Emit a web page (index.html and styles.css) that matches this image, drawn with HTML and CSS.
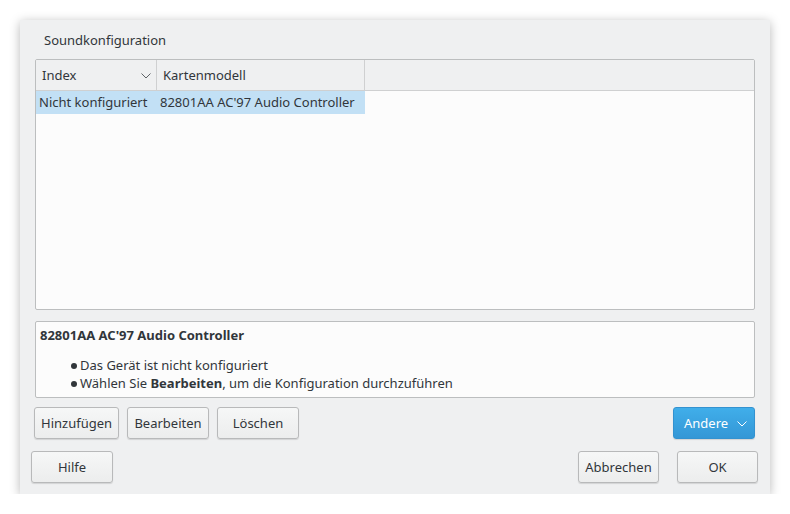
FILE: index.html
```html
<!DOCTYPE html>
<html lang="de">
<head>
<meta charset="utf-8">
<link rel="stylesheet" href="styles.css">
</head>
<body>
<div class="dialog">
  <div class="title">Soundkonfiguration</div>
  <div class="table">
    <div class="thead">
      <div class="th c1">Index
        <svg class="chev" width="10" height="6" viewBox="0 0 10 6"><path d="M0.5 0.5 L5 5 L9.5 0.5" fill="none" stroke="#5e6266" stroke-width="1"/></svg>
      </div>
      <div class="th c2">Kartenmodell</div>
      <div class="th rest"></div>
    </div>
    <div class="tbody">
      <div class="row sel">
        <div class="td c1">Nicht konfiguriert</div>
        <div class="td c2">82801AA AC'97 Audio Controller</div>
      </div>
    </div>
  </div>
  <div class="info">
    <div class="info-title">82801AA AC'97 Audio Controller</div>
    <ul class="info-list">
      <li>Das Gerät ist nicht konfiguriert</li>
      <li>Wählen Sie <b>Bearbeiten</b>, um die Konfiguration durchzuführen</li>
    </ul>
  </div>
  <div class="actions">
    <button class="btn b-add">Hinzufügen</button>
    <button class="btn b-edit">Bearbeiten</button>
    <button class="btn b-del">Löschen</button>
    <span class="spacer"></span>
    <button class="btn primary">Andere
      <svg class="chev2" width="10" height="6" viewBox="0 0 10 6"><path d="M0.5 0.5 L5 5 L9.5 0.5" fill="none" stroke="#ffffff" stroke-width="1"/></svg>
    </button>
  </div>
  <div class="footer">
    <button class="btn b-help">Hilfe</button>
    <span class="spacer"></span>
    <button class="btn b-cancel">Abbrechen</button>
    <button class="btn b-ok">OK</button>
  </div>
</div>
</body>
</html>
```
FILE: styles.css
```css
html, body {
  margin: 0;
  padding: 0;
  background: #ffffff;
}
body {
  font-family: "Noto Sans", "DejaVu Sans", sans-serif;
  font-size: 13px;
  color: #31363b;
}
.dialog {
  margin: 20px 0 0 20px;
  width: 750px;
  height: 474px;
  box-sizing: border-box;
  background: #eff0f1;
  box-shadow: 0 2px 10px rgba(0,0,0,0.28);
  padding: 11px 15px 0 15px;
  display: flex;
  flex-direction: column;
}
.title {
  height: 18px;
  line-height: 18px;
  padding-left: 9px;
  margin-bottom: 10px;
}
.table {
  height: 251px;
  box-sizing: border-box;
  border: 1px solid #bcbebf;
  border-radius: 2px;
  background: #fcfcfc;
  display: flex;
  flex-direction: column;
  overflow: hidden;
}
.thead {
  display: flex;
  height: 30px;
  background: #eff0f1;
  border-bottom: 1px solid #cfd0d1;
  flex: none;
}
.th {
  box-sizing: border-box;
  line-height: 30px;
  padding-left: 6px;
  border-right: 1px solid #cfd0d1;
  position: relative;
}
.th.rest {
  flex: 1;
  border-right: none;
}
.c1 { width: 121px; box-sizing: border-box; }
.c2 { width: 208px; box-sizing: border-box; }
.chev {
  position: absolute;
  right: 5px;
  top: 13px;
}
.row {
  display: flex;
  height: 23px;
  width: 329px;
}
.row.sel {
  background: #c2e0f5;
}
.td {
  line-height: 23px;
  padding-left: 3px;
  white-space: nowrap;
}
.info {
  margin-top: 11px;
  height: 77px;
  box-sizing: border-box;
  border: 1px solid #bcbebf;
  border-radius: 2px;
  background: #fcfcfc;
  padding: 4px 4px 0 4px;
}
.info-title {
  font-weight: bold;
  line-height: 18px;
}
.info-list {
  margin: 12px 0 0 0;
  padding: 0 0 0 30px;
  list-style: none;
}
.info-list li {
  line-height: 18px;
  position: relative;
  padding-left: 10px;
}
.info-list li::before {
  content: "";
  position: absolute;
  left: 1px;
  top: 7px;
  width: 6px;
  height: 6px;
  border-radius: 50%;
  background: #31363b;
}
.actions, .footer {
  display: flex;
  align-items: center;
}
.actions {
  margin-top: 9px;
  gap: 8px;
  margin-left: -1px;
}
.footer {
  margin-top: 12px;
  margin-left: -4px;
  margin-right: -3px;
}
.spacer { flex: 1; }
.btn {
  font-family: inherit;
  font-size: 13px;
  color: #31363b;
  height: 32px;
  box-sizing: border-box;
  border: 1px solid #b8b9ba;
  border-radius: 3px;
  background: linear-gradient(#f6f7f7, #eceded);
  box-shadow: 0 1px 1px rgba(0,0,0,0.12);
  padding: 0 6px;
  margin: 0;
}
.b-add { width: 85px; }
.b-edit { width: 82px; }
.b-del { width: 82px; }
.b-help { width: 82px; }
.b-cancel { width: 81px; margin-right: 18px; }
.b-ok { width: 81px; }
.btn.primary {
  width: 82px;
  background: linear-gradient(#40aeea, #3497d6);
  border-color: #3392d0;
  color: #ffffff;
  text-align: left;
  padding-left: 10px;
  position: relative;
}
.chev2 {
  position: absolute;
  right: 7px;
  top: 13px;
}
```
